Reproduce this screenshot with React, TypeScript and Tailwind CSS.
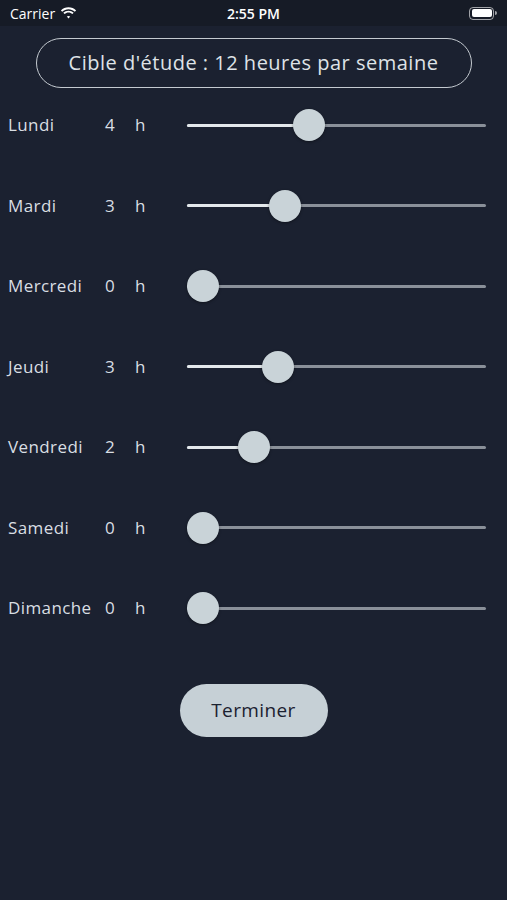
const days = [
  { name: 'Lundi', hours: 4, pos: 0.397 },
  { name: 'Mardi', hours: 3, pos: 0.307 },
  { name: 'Mercredi', hours: 0, pos: 0 },
  { name: 'Jeudi', hours: 3, pos: 0.281 },
  { name: 'Vendredi', hours: 2, pos: 0.191 },
  { name: 'Samedi', hours: 0, pos: 0 },
  { name: 'Dimanche', hours: 0, pos: 0 },
]

function StatusBar() {
  return (
    <div className="relative flex h-[26px] items-center justify-between bg-[#161b26] px-[10px] text-[14px] text-white">
      <div className="flex items-center gap-[5px]">
        <span>Carrier</span>
        <svg width="17" height="12" viewBox="0 0 17 12" fill="white">
          <path d="M8.5 2.2c2.4 0 4.6.9 6.3 2.5l1.3-1.3C14.1 1.4 11.4.3 8.5.3S2.9 1.4.9 3.4l1.3 1.3C3.9 3.1 6.1 2.2 8.5 2.2z" />
          <path d="M8.5 5.6c1.5 0 2.8.6 3.9 1.5l1.3-1.3c-1.4-1.3-3.2-2.1-5.200-2.1s-3.8.8-5.2 2.1l1.3 1.3c1.1-.9 2.4-1.5 3.9-1.5z" />
          <path d="M8.5 8.9c.7 0 1.3.3 1.7.7l-1.7 1.8-1.7-1.8c.4-.4 1-.7 1.7-.7z" />
        </svg>
      </div>
      <span className="absolute left-1/2 -translate-x-1/2 font-semibold">2:55 PM</span>
      <div className="flex items-center">
        <div className="flex h-[13px] w-[25px] items-center rounded-[4px] border border-white/60 p-[1.5px]">
          <div className="h-full w-full rounded-[2px] bg-white" />
        </div>
        <div className="ml-[1px] h-[4px] w-[2px] rounded-r-sm bg-white/60" />
      </div>
    </div>
  )
}

function Slider({ pos }: { pos: number }) {
  const left = pos * 267
  return (
    <div className="relative h-[32px] w-[299px]">
      <div className="absolute left-0 right-0 top-[14.5px] h-[3px] rounded-full bg-[#8a9099]" />
      <div className="absolute left-0 top-[14.5px] h-[3px] rounded-full bg-[#e3e8eb]" style={{ width: left + 16 }} />
      <div className="absolute top-0 h-[32px] w-[32px] rounded-full bg-[#c9d3d8] shadow-[0_1px_3px_rgba(0,0,0,0.4)]" style={{ left }} />
    </div>
  )
}

export default function App() {
  return (
    <div className="min-h-[900px] bg-[#1b2130] font-['Open_Sans',sans-serif] text-[#d9dee3]">
      <StatusBar />
      <div className="flex justify-center pt-[12px]">
        <div className="flex h-[50px] w-[436px] items-center justify-center rounded-full border-[1.5px] border-[#c4cad0] text-[20px] tracking-[0.5px] text-[#dfe3e7]">
          Cible d'étude : 12 heures par semaine
        </div>
      </div>
      <div className="mt-[21px] flex flex-col gap-[48.5px]">
        {days.map((d) => (
          <div key={d.name} className="flex h-[32px] items-center">
            <span className="w-[105px] pl-[8px] text-[17px] tracking-[0.4px]">{d.name}</span>
            <span className="w-[30px] text-[17px]">{d.hours}</span>
            <span className="w-[52px] text-[17px]">h</span>
            <Slider pos={d.pos} />
          </div>
        ))}
      </div>
      <div className="mt-[60px] flex justify-center">
        <button className="h-[53px] w-[148px] rounded-full bg-[#c6d0d6] text-[19px] tracking-[0.4px] text-[#1b2130]">
          Terminer
        </button>
      </div>
    </div>
  )
}
